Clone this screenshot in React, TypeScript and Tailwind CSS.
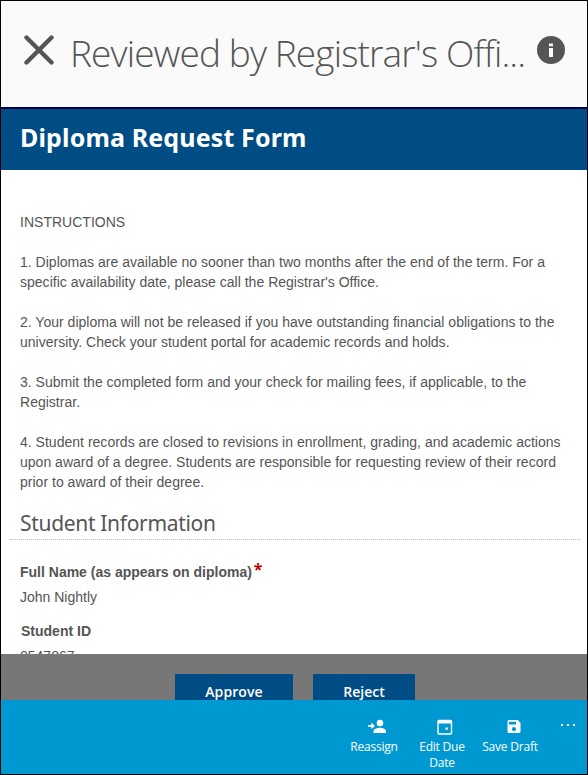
import type { ReactNode } from "react";

const instructions = [
  ["INSTRUCTIONS"],
  [
    "1. Diplomas are available no sooner than two months after the end of the term. For a",
    "specific availability date, please call the Registrar's Office.",
  ],
  [
    "2. Your diploma will not be released if you have outstanding financial obligations to the",
    "university. Check your student portal for academic records and holds.",
  ],
  [
    "3. Submit the completed form and your check for mailing fees, if applicable, to the",
    "Registrar.",
  ],
  [
    "4. Student records are closed to revisions in enrollment, grading, and academic actions",
    "upon award of a degree. Students are responsible for requesting review of their record",
    "prior to award of their degree.",
  ],
];

function ToolbarItem({ icon, label, className }: { icon: ReactNode; label: ReactNode; className: string }) {
  return (
    <button className={`flex flex-col items-center pt-[19px] ${className}`}>
      <span className="flex h-4 items-start">{icon}</span>
      <span className="mt-1 text-center text-[12px] leading-4 tracking-[-0.2px] whitespace-nowrap">{label}</span>
    </button>
  );
}

export default function App() {
  return (
    <div className="flex h-[775px] w-[588px] flex-col overflow-hidden border border-black bg-white font-['Liberation_Sans',sans-serif] text-[#555555]">
      {/* Header */}
      <header className="flex h-[108px] shrink-0 items-start border-b-2 border-[#000050] bg-[#fafafa]">
        <svg className="mt-[34px] ml-[23px] shrink-0" width="30" height="30" viewBox="0 0 30 30">
          <path d="M2.5 2.5 27.5 27.5M27.5 2.5 2.5 27.5" stroke="#555555" strokeWidth="4.4" strokeLinecap="round" fill="none" />
        </svg>
        <h1 className="mt-[24px] ml-[16px] w-[460px] font-['Open_Sans',sans-serif] text-[37px] leading-[56px] font-light tracking-[-0.88px] whitespace-nowrap">
          Reviewed by Registrar's Offi...
        </h1>
        <svg className="mt-[35px] ml-[7px] shrink-0" width="28" height="28" viewBox="0 0 28 28">
          <circle cx="14" cy="14" r="14" fill="#555555" />
          <path d="M12 7.5h4v2.7h-4zM12 12h4v9h-4z" fill="#fafafa" />
        </svg>
      </header>

      <h2 className="h-[61px] shrink-0 bg-[#004d85] pl-[19px] font-['Noto_Sans',sans-serif] text-[25px] leading-[57px] font-bold tracking-[0.15px] whitespace-nowrap text-white">
        Diploma Request Form
      </h2>

      {/* Form content */}
      <main className="h-[484px] shrink-0 overflow-hidden pt-[42px] text-[14px] leading-5">
        <div className="flex flex-col gap-5 pl-[19px] tracking-[0.015px]">
          {instructions.map((lines) => (
            <p key={lines[0]}>
              {lines.map((line) => (
                <span key={line} className="block whitespace-nowrap">{line}</span>
              ))}
            </p>
          ))}
        </div>

        <h3 className="mr-[7px] ml-[9px] mt-[15px] h-[33px] border-b border-dotted border-[#bbbbbb] pl-[10px] font-['Noto_Sans',sans-serif] text-[21px] leading-[32px] tracking-[-0.32px]">
          Student Information
        </h3>

        <div className="pt-[22px] pl-[19px]">
          <div className="flex h-5 font-bold">
            <span>Full Name (as appears on diploma)</span>
            <span className="ml-[2px] font-['Noto_Sans',sans-serif] text-[16px] leading-[14px] text-[#c00000]">*</span>
          </div>
          <div className="mt-[5px]">John Nightly</div>
          <div className="mt-[14px] pl-px font-bold">Student ID</div>
          <div className="mt-[5px]">0547867</div>
        </div>
      </main>

      {/* Outcome buttons */}
      <div className="flex h-[46px] shrink-0 gap-5 overflow-hidden bg-[#777777] pt-5 pl-[174px] font-['Open_Sans',sans-serif] text-[14px] font-semibold text-white">
        <button className="h-[35px] w-[118px] shrink-0 bg-[#004d85] leading-[35px] tracking-[0.1px]">Approve</button>
        <button className="h-[35px] w-[102px] shrink-0 bg-[#004d85] leading-[35px]">Reject</button>
      </div>

      {/* Command bar */}
      <footer className="flex h-[74px] shrink-0 items-start bg-[#0098d0] pl-[345px] font-['Open_Sans',sans-serif] text-white">
        <ToolbarItem
          className="w-[56px]"
          icon={
            <svg className="ml-[5px]" width="18" height="15" viewBox="0 0 18 15" fill="currentColor">
              <circle cx="12" cy="4" r="3.3" />
              <path d="M5.5 14v-1.8C5.5 10 9.5 8.8 12 8.8s6 1.2 6 3.4V14zM0 6h3.3V3.5L7 7 3.3 10V7.8H0z" />
            </svg>
          }
          label="Reassign"
        />
        <ToolbarItem
          className="ml-[12px] w-[56px]"
          icon={
            <svg className="ml-[5px]" width="16" height="16" viewBox="0 0 16 16" fill="none">
              <rect x="1" y="1.5" width="13.5" height="13.5" rx="1" stroke="currentColor" strokeWidth="1.4" />
              <path d="M1 1h13.5v3.5H1zM8.5 8.5h2.2v2.2H8.5z" fill="currentColor" />
            </svg>
          }
          label={<>Edit Due<br />Date</>}
        />
        <ToolbarItem
          className="ml-[10px] w-[60px]"
          icon={
            <svg className="ml-[7px]" width="14" height="15" viewBox="0 0 14 15">
              <path
                d="M2 1h8.6L13.5 3.8V12.5a1.5 1.5 0 0 1-1.5 1.5H2A1.5 1.5 0 0 1 .5 12.5v-10A1.5 1.5 0 0 1 2 1zM2 2.8v2.7h7V2.8zM7 8a2.1 2.1 0 1 0 0 4.2A2.1 2.1 0 0 0 7 8z"
                fill="currentColor"
                fillRule="evenodd"
              />
            </svg>
          }
          label="Save Draft"
        />
        <span className="mt-[24px] ml-[21px] flex gap-[4px]">
          <i className="size-[2px] bg-white" />
          <i className="size-[2px] bg-white" />
          <i className="size-[2px] bg-white" />
        </span>
      </footer>
    </div>
  );
}
